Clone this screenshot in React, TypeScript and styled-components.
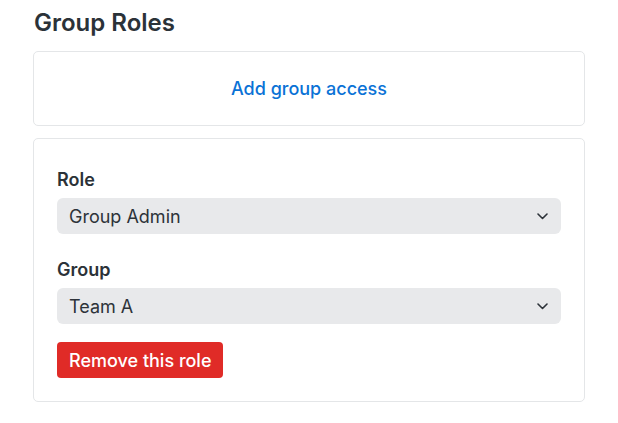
import React from "react";
import styled, { createGlobalStyle } from "styled-components";

const Global = createGlobalStyle`
  html, body { margin: 0; padding: 0; background: #fff; }
  body { font-family: Inter, "Noto Sans", sans-serif; color: #2d3339; }
  * { box-sizing: border-box; }
`;

const Page = styled.div`
  padding: 9px 33px 20px 33px;
  width: 618px;
`;

const Heading = styled.h2`
  margin: 0 0 14px 1px;
  font-size: 24px;
  line-height: 28px;
  font-weight: 600;
  color: #2b3238;
`;

const Card = styled.div`
  border: 1px solid #e4e6e8;
  border-radius: 5px;
  background: #fff;
  width: 552px;
`;

const AddCard = styled(Card)`
  height: 75px;
  display: flex;
  align-items: center;
  justify-content: center;
  margin-bottom: 12px;
`;

const LinkButton = styled.button`
  background: none;
  border: none;
  padding: 0;
  font-family: inherit;
  font-size: 18px;
  font-weight: 500;
  color: #0a72d6;
  cursor: pointer;
`;

const RoleCard = styled(Card)`
  padding: 30px 23px 23px 23px;
  display: flex;
  flex-direction: column;
`;

const Field = styled.div<{ $gapAfter: number }>`
  display: flex;
  flex-direction: column;
  gap: 7px;
  margin-bottom: ${(p) => p.$gapAfter}px;
`;

const Label = styled.label`
  font-size: 18px;
  line-height: 22px;
  font-weight: 600;
  color: #2b3238;
`;

const SelectBox = styled.div`
  height: 36px;
  border-radius: 6px;
  background: #e8e9eb;
  display: flex;
  align-items: center;
  justify-content: space-between;
  padding: 0 13px 0 12px;
  font-size: 18px;
  color: #2d3339;
`;

const Chevron = () => (
  <svg width="11" height="7" viewBox="0 0 11 7" fill="none">
    <path d="M1 1l4.5 4.5L10 1" stroke="#2d3339" strokeWidth="1.6" strokeLinecap="round" strokeLinejoin="round" />
  </svg>
);

const DangerButton = styled.button`
  align-self: flex-start;
  height: 36px;
  padding: 0 12px;
  border: none;
  border-radius: 4px;
  background: #e02b27;
  color: #fff;
  font-family: inherit;
  font-size: 18px;
  font-weight: 500;
  cursor: pointer;
`;

export default function App() {
  return (
    <>
      <Global />
      <Page>
        <Heading>Group Roles</Heading>
        <AddCard>
          <LinkButton>Add group access</LinkButton>
        </AddCard>
        <RoleCard>
          <Field $gapAfter={25}>
            <Label>Role</Label>
            <SelectBox>
              <span>Group Admin</span>
              <Chevron />
            </SelectBox>
          </Field>
          <Field $gapAfter={18}>
            <Label>Group</Label>
            <SelectBox>
              <span>Team A</span>
              <Chevron />
            </SelectBox>
          </Field>
          <DangerButton>Remove this role</DangerButton>
        </RoleCard>
      </Page>
    </>
  );
}
